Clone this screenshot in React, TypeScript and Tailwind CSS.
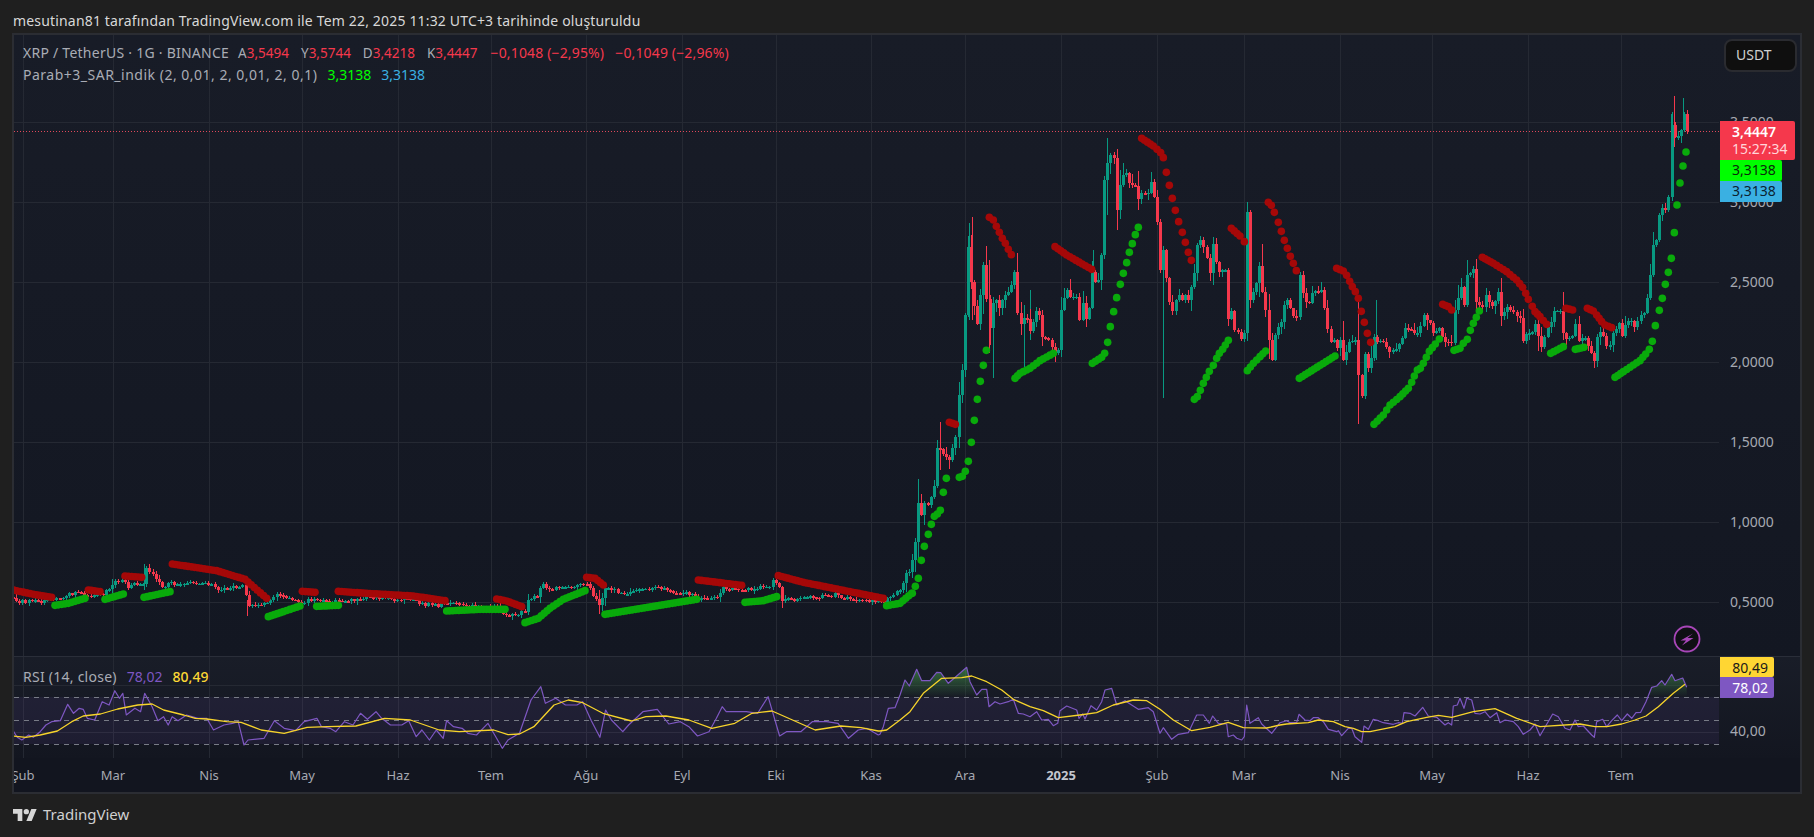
import React from "react";

type P = [number, number];
const z = (ox: number, oy: number, a: number[]): P[] => {
  const r: P[] = [];
  for (let i = 0; i < a.length; i += 2) r.push([ox + a[i] / 3, oy + a[i + 1] / 3]);
  return r;
};
const zw = (a: number[]): P[] => {
  const r: P[] = [];
  for (let i = 0; i < a.length; i += 2) r.push([a[i] / 1.742, 650 + a[i + 1] / 3]);
  return r;
};

const closeTrace: P[] = [
  ...z(0, 540, [40,175,60,185,90,183,130,183,150,178,190,175,205,160,225,160,250,165,275,170,305,165,320,150,350,125,375,122,380,145,400,130,430,135,435,85,450,95,470,120,490,140,510,125,525,135,560,125,600,130,630,130,650,150,690,140,725,135,735,165,745,200,800,190,825,165,860,175,900,185,950,175,990,185,1035,185,1080,180,1110,170,1180,178,1245,180,1260,192,1310,195,1350,190,1400,200]),
  ...z(470, 540, [40,202,80,200,95,222,125,225,160,215,175,180,200,170,215,130,235,150,270,140,300,140,330,130,350,135,370,165,390,195,405,145,430,145,450,160,490,155,520,150,560,140,590,150,620,160,660,160,685,175,740,170,760,145,800,150,850,145,895,140,910,120,925,140,935,180,990,175,1040,170,1090,165,1150,180,1200,182,1245,185]),
  ...z(850, 200, [110,1190,130,1183,150,1170,170,1115,180,1115,188,1080,196,1025,205,910,215,945,225,910,235,915,253,855,262,745,280,760,290,770,298,780,307,745,316,710,328,585,338,510,347,345,356,140,365,245,374,318,383,372,392,285,400,195]),
  ...z(900, 120, [267,625,280,550,290,540,300,565,309,540,318,525,327,515,335,495,345,455,355,580,363,612,372,595,382,597,391,632,400,605,409,572,418,585,427,652,436,655,445,660,454,680,463,700,472,690,484,570,493,535,500,510,510,530,519,530,528,530,537,600,546,550,555,598,568,565,578,455,587,485,596,480,605,405,613,180,622,130,631,105,640,115,649,270,660,195,670,165,680,160,689,190,698,195,707,197,716,238,725,220,743,215,752,187,761,230,770,305,781,450,790,390,800,475,808,545,818,572,827,540,836,525,845,540,855,525,864,540,873,500,883,460,892,375,901,360,910,380,919,415,928,458,939,373,947,425,957,455,966,450,975,450,985,597,994,573,1003,630,1012,635,1021,658,1030,640,1041,275,1050,540,1060,515,1069,488,1079,437,1088,515,1097,570,1106,660,1115,720,1124,645,1133,620,1142,605,1151,555,1160,540,1170,565,1179,588,1188,590,1198,465,1207,520,1216,545,1225,550,1235,520,1244,510,1262,510,1272,565,1281,628,1291,665,1300,660,1309,685,1320,660,1330,720,1340,695,1349,665,1364,660,1371,765,1385,828,1394,703,1405,745,1414,715,1423,650,1432,665,1450,665,1470,695,1490,685]),
  ...z(1300, 230, [315,295,330,300,345,310,355,310,370,255,385,280,397,305,415,295,430,322,440,335,455,338,465,240,480,170,492,225,505,135,520,118,530,215,543,230,555,195,565,215,578,228,595,190,605,258,620,235,640,245,655,265,668,332,680,312,697,305,705,280,725,350,733,320,750,275,760,243,775,242,790,308,800,328,815,318,825,282,835,330,855,320,872,368,882,392,893,320,905,305,920,348,930,345,940,310,955,280,965,318,975,285,992,272,1005,292,1012,270,1030,250,1040,205,1048,135,1058,45]),
  [1656,240],[1659,215],[1662,208],[1665,210],[1668,197],[1671.7,125],[1675,137],[1678,136],[1681,130],[1684,114],[1687,131],
];

const wicksExtra: [number, number, number, string][] = [
  [1163.3,250,398,"g"],[1358.3,300,424,"r"],[1247,202,330,"g"],[1107,138,215,"g"],[1116.7,160,230,"r"],[918,479,560,"g"],[940,422,470,"r"],
  [968.7,223,320,"g"],[971.7,217,320,"r"],[993,300,378,"g"],[989,260,353,"r"],[1024,305,368,"g"],[1674,96,147,"r"],[1683,98,130,"g"],[1687,110,134,"r"],[1671,114,195,"g"],
  [144.3,564,590,"g"],[246.7,600,616,"r"],[599,590,614,"r"],[1376,300,360,"g"],[1093,250,300,"g"],[1030,290,340,"g"],
];

function rng(seed: number) {
  let a = seed;
  return () => {
    a |= 0; a = (a + 0x6d2b79f5) | 0;
    let t = Math.imul(a ^ (a >>> 15), 1 | a);
    t = (t + Math.imul(t ^ (t >>> 7), 61 | t)) ^ t;
    return ((t ^ (t >>> 14)) >>> 0) / 4294967296;
  };
}

function buildCandles() {
  const rand = rng(77);
  const out: { x: number; o: number; c: number; h: number; l: number }[] = [];
  let prev = 597;
  const tr = closeTrace;
  for (let k = 540; k >= 0; k--) {
    const x = 1687 - k * 3.1;
    if (x < 13) continue;
    let i = 0;
    while (i < tr.length - 2 && tr[i + 1][0] < x) i++;
    const [x0, y0] = tr[i];
    const [x1, y1] = tr[i + 1];
    let c: number;
    if (Math.abs(x - x0) < 1.6) c = y0;
    else if (Math.abs(x - x1) < 1.6) c = y1;
    else c = y0 + ((y1 - y0) * (x - x0)) / (x1 - x0 || 1);
    const sparse = x1 - x0 > 5;
    if (sparse) c += (rand() - 0.5) * 3.5;
    const o = prev;
    const body = Math.abs(c - o);
    const base = x > 900 ? 8 : 2.5;
    const hw = rand() * rand() * (base + Math.min(body, 30) * 0.6) + 0.8;
    const lw = rand() * rand() * (base + Math.min(body, 30) * 0.6) + 0.8;
    out.push({ x, o, c, h: Math.min(o, c) - hw, l: Math.max(o, c) + lw });
    prev = c;
  }
  return out;
}
const candles = buildCandles();

const sar: { c: string; p: P[] }[] = [
  { c: "r", p: z(0, 540, [40,150,100,163,155,172]) },
  { c: "g", p: z(0, 540, [165,196,205,190,255,175]) },
  { c: "r", p: z(0, 540, [265,150,300,155]) },
  { c: "g", p: z(0, 540, [315,178,370,162]) },
  { c: "r", p: z(0, 540, [375,108,425,112]) },
  { c: "g", p: z(0, 540, [432,172,510,155]) },
  { c: "r", p: z(0, 540, [517,72,650,92,735,118,800,175]) },
  { c: "g", p: z(0, 540, [805,230,850,215,900,198]) },
  { c: "r", p: z(0, 540, [907,154,945,157]) },
  { c: "g", p: z(0, 540, [950,199,1015,196]) },
  { c: "r", p: z(0, 540, [1015,154,1100,160,1240,168,1335,182]) },
  { c: "g", p: z(0, 540, [1340,213,1440,208,1515,208]) },
  { c: "r", p: z(470, 540, [80,177,110,183,155,200]) },
  { c: "g", p: z(470, 540, [165,248,205,235,240,205,280,178,345,152]) },
  { c: "r", p: z(470, 540, [350,112,375,115,400,135]) },
  { c: "g", p: z(470, 540, [405,223,680,178]) },
  { c: "r", p: z(470, 540, [685,120,815,136]) },
  { c: "g", p: z(470, 540, [825,187,880,182,920,170]) },
  { c: "r", p: z(470, 540, [925,107,1000,127,1240,175]) },
  { c: "g", p: [...z(470, 540, [1250,197,1290,190,1325,160]), ...z(850, 200, [187,1180,196,1159,205,1135,214,1081,223,1039,235,1003,244,973,253,949,262,942,271,931,280,877,289,835])] },
  { c: "r", p: z(850, 200, [298,667,316,673]) },
  { c: "g", p: z(850, 200, [328,832,337,829,346,814,355,784,364,727,373,661,382,598,391,544,400,496,409,451]) },
  { c: "r", p: z(900, 120, [268,292,280,300,289,319,298,337,307,355,316,370,325,388,334,404]) },
  { c: "g", p: z(900, 120, [345,775,360,760,390,745,420,722,460,700]) },
  { c: "r", p: z(900, 120, [465,380,500,405,575,448]) },
  { c: "g", p: z(900, 120, [577,730,605,712,614,700,623,667,631,620,641,575,650,533,661,493,670,460,680,428,688,397,697,371,706,344,715,322]) },
  { c: "r", p: z(900, 120, [725,55,760,78,782,98,790,113,799,157,808,196,817,235,826,271,836,305,847,337,856,367,865,397,874,421]) },
  { c: "g", p: z(900, 120, [883,838,892,830,901,811,910,790,919,772,928,754,940,736,950,715,958,700,968,688,976,675,985,661]) },
  { c: "r", p: z(900, 120, [994,325,1020,348,1033,365]) },
  { c: "g", p: z(900, 120, [1042,752,1060,730,1080,710,1097,693]) },
  { c: "r", p: z(900, 120, [1105,247,1114,256,1123,277,1135,307,1144,334,1153,361,1162,385,1171,409,1180,430,1189,452]) },
  { c: "g", p: z(900, 120, [1198,775,1305,708]) },
  { c: "r", p: z(900, 120, [1310,445,1330,453,1340,466,1349,484,1357,500,1366,515,1375,535,1384,574,1393,607,1402,640,1412,667]) },
  { c: "g", p: z(1300, 230, [222,583,250,555,270,525,300,500,325,475,335,457,343,438,352,420,361,415,370,400,379,382,388,364,397,353,406,342,418,327]) },
  { c: "r", p: z(1300, 230, [428,223,445,230,455,240]) },
  { c: "g", p: z(1300, 230, [462,361,480,355,490,340,502,328,511,301,520,280,529,262,538,243]) },
  { c: "r", p: z(1300, 230, [547,82,580,100,620,125,650,150,668,172,677,190,685,208,697,229,705,245,720,260,740,283]) },
  { c: "g", p: z(1300, 230, [752,370,790,350]) },
  { c: "r", p: z(1300, 230, [798,235,818,240]) },
  { c: "g", p: z(1300, 230, [826,358,852,352]) },
  { c: "r", p: z(1300, 230, [862,235,880,243,890,255,905,275,915,285,935,293]) },
  { c: "g", p: [...z(1300, 230, [945,442,970,425,1020,392,1037,372,1048,358,1057,334,1066,287,1078,241,1087,205,1096,163,1105,127,1114,85,1123,8]), [1677,205],[1680,183],[1683,166],[1686,152]] },
];

const sarDots: { x: number; y: number; c: string }[] = [];
sar.forEach((s) => {
  s.p.forEach((pt, i) => {
    sarDots.push({ x: pt[0], y: pt[1], c: s.c });
    const n = s.p[i + 1];
    if (n && n[0] - pt[0] > 4.5) {
      const steps = Math.round((n[0] - pt[0]) / 3.1);
      for (let j = 1; j < steps; j++) {
        sarDots.push({ x: pt[0] + ((n[0] - pt[0]) * j) / steps, y: pt[1] + ((n[1] - pt[1]) * j) / steps, c: s.c });
      }
    }
  });
});

const rsiPurple: P[] = [
  ...zw([22,240,30,262,38,270,50,255,58,262,70,245,80,225,90,215,105,212,118,163,128,190,138,175,145,178,152,205,165,210,178,155,190,165,200,122,208,145,214,130,220,195,235,175,245,185,252,130,265,170,275,212,285,200,293,225,300,200,310,212,325,195,345,205,360,205,372,240,390,225,405,220,415,215,425,285,432,270,460,265,478,212,495,235,515,242,530,215,552,205,560,230,575,235,585,245,600,215,615,225,628,190,640,208,655,185,665,205,680,225,700,225,712,212,725,260,735,240,748,270,760,240,772,265,778,212,790,230,805,235,815,250,830,255,850,220,865,265,875,295,885,270,905,250,925,150,942,110,950,160,968,145,985,165,1005,165,1015,155,1030,212,1045,262,1055,180,1065,210,1085,245,1095,225,1120,185,1145,178,1165,222,1185,215,1200,230,1215,258,1235,245,1248,205,1258,170,1265,185,1300,185,1320,190,1338,140,1358,258,1370,245,1395,245,1415,215,1440,215,1460,220,1478,265,1495,240,1510,235,1530,255]),
  ...z(880, 640, [0,283,10,260,25,205,45,203,60,165,75,120,88,138,110,88,125,122,150,122,170,97,182,98,205,130,230,108,260,82,270,125,290,165,305,148,320,148,327,200,345,185,360,192,385,185,400,178,415,220,430,222,450,230,470,215,485,240,505,238,520,257,533,250,540,212,560,198,590,210,597,235,608,222,615,237,633,197,650,210,665,185,675,150,695,145,710,195,735,182,775,208,805,203,820,215,840,280,850,263,875,298,895,283,925,278,950,225,970,225,988,250,998,228,1015,250,1040,252,1045,290,1060,285,1070,295,1085,300,1093,290,1100,195,1110,250,1135,233,1145,252,1175,280]),
  ...z(1230, 650, [150,218,170,212,180,218,200,218,207,193,225,210,240,212,250,203,265,203,280,215,295,238,320,245,325,242,335,257,355,235,365,235,375,260,395,277,402,228,415,238,430,208,445,212,460,218,490,223,505,218,517,220,522,188,540,190,555,198,578,172,595,198,620,202,645,225,655,218,665,225,670,168,682,165,690,145,702,175,710,145,725,150,735,190,750,192,765,185,780,203,800,188,810,218,825,210,850,215,865,230,880,253,900,240,915,222,930,257,968,192,985,200,1005,235,1020,240,1035,210,1045,230,1060,228,1085,255,1093,262,1100,215,1118,208,1130,230,1145,212,1162,195,1175,212,1192,192,1205,205,1218,188,1232,187,1248,155,1265,112,1280,108,1295,92,1305,105,1325,73,1335,92,1358,84,1370,112]),
];

const rsiYellow: P[] = [
  ...zw([22,258,45,262,70,255,100,243,125,215,145,198,175,192,205,177,240,165,265,162,285,180,320,195,340,205,360,207,395,215,420,217,455,240,495,250,535,232,570,230,620,228,670,205,715,210,765,240,800,245,860,240,885,254,905,252,930,230,965,165,990,150,1015,158,1050,190,1100,213,1125,200,1160,198,1200,210,1240,235,1280,220,1310,190,1345,183,1420,240,1465,228,1500,233,1530,243]),
  ...z(880, 640, [0,273,20,270,60,240,90,215,130,160,185,115,245,113,275,108,320,125,365,150,400,178,450,200,490,212,535,233,600,225,650,218,700,195,760,180,800,182,840,208,880,240,935,272,990,262,1045,247,1090,263,1160,264]),
  ...z(1230, 650, [150,225,170,222,235,218,265,210,310,215,345,230,370,235,395,245,420,245,495,230,530,215,590,202,625,196,665,202,730,185,795,176,860,205,930,230,1050,222,1095,230,1130,230,1175,222,1215,210,1248,198,1285,170,1330,130,1365,103]),
];

const toPath = (p: P[]) => p.map((q, i) => `${i ? "L" : "M"}${q[0].toFixed(1)} ${q[1].toFixed(1)}`).join("");
const purplePath = toPath(rsiPurple);
const yellowPath = toPath(rsiYellow);
const fillPath = `${purplePath}L${rsiPurple[rsiPurple.length - 1][0].toFixed(1)} 697L${rsiPurple[0][0].toFixed(1)} 697Z`;

const verticals = [23, 113, 209, 302, 398, 491, 586, 682, 776, 871, 965, 1061, 1157, 1244, 1340, 1432, 1528, 1621];
const times: { x: number; t: string; bold?: boolean }[] = [
  { x: 23, t: "Şub" }, { x: 113, t: "Mar" }, { x: 209, t: "Nis" }, { x: 302, t: "May" }, { x: 398, t: "Haz" }, { x: 491, t: "Tem" },
  { x: 586, t: "Ağu" }, { x: 682, t: "Eyl" }, { x: 776, t: "Eki" }, { x: 871, t: "Kas" }, { x: 965, t: "Ara" }, { x: 1061, t: "2025", bold: true },
  { x: 1157, t: "Şub" }, { x: 1244, t: "Mar" }, { x: 1340, t: "Nis" }, { x: 1432, t: "May" }, { x: 1528, t: "Haz" }, { x: 1621, t: "Tem" },
];
const prices: { y: number; t: string }[] = [
  { y: 122, t: "3,5000" }, { y: 202, t: "3,0000" }, { y: 282, t: "2,5000" }, { y: 362, t: "2,0000" }, { y: 442, t: "1,5000" }, { y: 522, t: "1,0000" }, { y: 602, t: "0,5000" },
];
const hLines = [122, 202, 282, 362, 442, 522, 602];

const GRID = "#252933";
const G = "#089981";
const R = "#f5384c";

function ChartSvg() {
  return (
    <svg className="absolute inset-0" width={1786} height={757} viewBox="14 35 1786 757">
      <defs>
        <linearGradient id="ob" x1="0" y1="668" x2="0" y2="697" gradientUnits="userSpaceOnUse">
          <stop offset="0" stopColor="#4caf50" stopOpacity="0.55" />
          <stop offset="1" stopColor="#4caf50" stopOpacity="0" />
        </linearGradient>
        <clipPath id="above"><rect x="14" y="657" width="1705" height="40" /></clipPath>
        <clipPath id="plot"><rect x="14" y="35" width="1705" height="621" /></clipPath>
      </defs>
      {hLines.map((y) => <line key={y} x1={14} x2={1719} y1={y + 0.5} y2={y + 0.5} stroke={GRID} />)}
      {verticals.map((x) => <line key={x} x1={x + 0.5} x2={x + 0.5} y1={35} y2={758} stroke={GRID} />)}
      <line x1={14} x2={1800} y1={656.5} y2={656.5} stroke="#2a2e39" />
      {[685.5, 732.5].map((y) => <line key={y} x1={14} x2={1719} y1={y} y2={y} stroke={GRID} />)}
      <rect x={14} y={697} width={1705} height={47} fill="#7e57c2" fillOpacity={0.1} />
      {[697.5, 720.5, 744.5].map((y) => <line key={y} x1={14} x2={1719} y1={y} y2={y} stroke="#787b86" strokeDasharray="5 5" />)}
      <g clipPath="url(#plot)">
        <line x1={14} x2={1719} y1={131.5} y2={131.5} stroke="#e0485a" strokeDasharray="1 2" shapeRendering="crispEdges" />
        <g shapeRendering="crispEdges">
          {wicksExtra.map((w, i) => <rect key={i} x={Math.round(w[0])} y={w[1]} width={1} height={w[2] - w[1]} fill={w[3] === "g" ? G : R} />)}
          {candles.map((c, i) => {
            const col = c.c <= c.o ? G : R;
            const top = Math.min(c.o, c.c);
            const h = Math.max(Math.abs(c.o - c.c), 1.5);
            const cx = Math.round(c.x);
            return (
              <g key={i} fill={col}>
                <rect x={cx} y={c.h} width={1} height={c.l - c.h} />
                <rect x={cx - 1} y={top} width={3} height={h} />
              </g>
            );
          })}
        </g>
        {sarDots.map((d, i) => <circle key={i} cx={d.x} cy={d.y} r={3.8} fill={d.c === "g" ? "#09aa0b" : "#a50808"} />)}
      </g>
      <path d={fillPath} fill="url(#ob)" clipPath="url(#above)" />
      <path d={purplePath} fill="none" stroke="#7e57c2" strokeWidth={1.2} strokeLinejoin="round" />
      <path d={yellowPath} fill="none" stroke="#f7d42b" strokeWidth={1.3} strokeLinejoin="round" />
    </svg>
  );
}

function Logo() {
  return (
    <svg width={24} height={12} viewBox="0 4 36 18" fill="#d6d6d6">
      <path d="M14 22H7V11H0V4h14v18zM28 22h-8l7.5-18h8L28 22z" />
      <circle cx="20" cy="8" r="4" />
    </svg>
  );
}

const FONT = "font-['Noto_Sans',sans-serif]";

export default function App() {
  return (
    <div className={`flex flex-col h-[837px] w-full overflow-hidden bg-[#1f1f1f] ${FONT}`}>
      <div className="flex h-[33px] shrink-0 items-center pl-[13px] pt-[7px] text-[14px] tracking-[0.17px] text-[#d8d8d8]">
        mesutinan81 tarafından TradingView.com ile Tem 22, 2025 11:32 UTC+3 tarihinde oluşturuldu
      </div>

      <div className="relative ml-[12px] flex h-[761px] w-[1790px] shrink-0 flex-col overflow-hidden border-2 border-[#2b2d33] text-[14px]">
        <div className="h-[621px] shrink-0 bg-gradient-to-b from-[#181c27] to-[#131722]" />
        <div className="h-px shrink-0 bg-[#2a2e39]" />
        <div className="h-[101px] shrink-0 bg-gradient-to-b from-[#191d28] to-[#131620]" />
        <div className="relative flex-1 bg-[#12151f]">
          {times.map((t) => (
            <span
              key={t.x}
              className={`absolute top-[8px] -translate-x-1/2 text-[13px] ${t.bold ? "font-bold text-[#c3c6ce]" : "text-[#a6a9b2]"}`}
              style={{ left: t.x - 14 }}
            >
              {t.t}
            </span>
          ))}
        </div>

        <ChartSvg />

        {/* legend */}
        <div className="absolute left-[9px] top-[9px] flex flex-col gap-[4px] leading-[18px] text-[#a9acb5]">
          <div className="flex items-center">
            <span className="mr-[9px] tracking-[0.25px]">XRP / TetherUS · 1G · BINANCE</span>
            <span className="mr-[12px] text-[13.5px]">A<span className="text-[#f5384c]">3,5494</span></span>
            <span className="mr-[12px] text-[13.5px]">Y<span className="text-[#f5384c]">3,5744</span></span>
            <span className="mr-[12px] text-[13.5px]">D<span className="text-[#f5384c]">3,4218</span></span>
            <span className="mr-[13px] text-[13.5px]">K<span className="text-[#f5384c]">3,4447</span></span>
            <span className="mr-[11px] tracking-[0.15px] text-[#f5384c]">−0,1048 (−2,95%)</span>
            <span className="tracking-[0.15px] text-[#f5384c]">−0,1049 (−2,96%)</span>
          </div>
          <div className="flex items-center gap-[10px]">
            <span className="tracking-[0.5px]">Parab+3_SAR_indik (2, 0,01, 2, 0,01, 2, 0,1)</span>
            <span className="text-[#00ff00]">3,3138</span>
            <span className="text-[#3ab0e2]">3,3138</span>
          </div>
        </div>

        {/* USDT */}
        <div className="absolute right-[3px] top-[4px] flex h-[33px] w-[73px] items-center rounded-[8px] border-2 border-[#2a2b30] bg-[#0f0f0f] pb-[2px] pl-[10px] text-[14px] text-[#d0d0d0]">
          USDT
        </div>

        {/* price scale */}
        {prices.map((p) => (
          <span key={p.y} className="absolute left-[1716px] -translate-y-1/2 text-[14px] text-[#a6a9b2]" style={{ top: p.y - 36 }}>
            {p.t}
          </span>
        ))}
        <div className="absolute left-[1706px] top-[86px] flex h-[39px] w-[75px] flex-col justify-center rounded-r-[2px] bg-[#f5384c] pb-[2px] pl-[12px] text-[14px] leading-[17px] text-white">
          <span className="font-semibold">3,4447</span>
          <span className="text-[#ffd5d9]">15:27:34</span>
        </div>
        <div className="absolute left-[1706px] top-[125px] flex h-[21px] w-[62px] items-center rounded-r-[2px] bg-[#00ff00] pb-[2px] pl-[12px] text-[14px] text-[#0b2a0b]">3,3138</div>
        <div className="absolute left-[1706px] top-[146px] flex h-[21px] w-[62px] items-center rounded-r-[2px] bg-[#3ab0e2] pb-[2px] pl-[12px] text-[14px] text-[#0b2230]">3,3138</div>

        <div className="absolute left-[1706px] top-[622px] flex h-[20px] w-[54px] items-center justify-end rounded-r-[2px] bg-[#ffd633] pr-[6px] text-[14px] text-[#1a1a1a]">80,49</div>
        <div className="absolute left-[1706px] top-[642px] flex h-[21px] w-[54px] items-center justify-end rounded-r-[2px] bg-[#7e57c2] pr-[6px] text-[14px] text-white">78,02</div>
        <span className="absolute left-[1716px] top-[695px] -translate-y-1/2 text-[14px] text-[#a6a9b2]">40,00</span>

        {/* RSI legend */}
        <div className="absolute left-[9px] top-[633px] flex items-center gap-[10px] leading-[18px] text-[#a9acb5]">
          <span className="tracking-[0.25px]">RSI (14, close)</span>
          <span className="text-[#7e57c2]">78,02</span>
          <span className="font-medium text-[#fdd835]">80,49</span>
        </div>

        {/* alert badge */}
        <svg className="absolute left-[1659px] top-[590px]" width={28} height={28} viewBox="0 0 28 28">
          <circle cx="14" cy="14" r="12.5" fill="#0f0f14" stroke="#a846b8" strokeWidth="1.8" />
          <path d="M20 8.5 7.5 15.5H13L9 20.5 20.5 13H14.5Z" fill="#a846b8" />
        </svg>
      </div>

      <div className="flex flex-1 items-center gap-[6px] pl-[13px] pb-[2px]">
        <Logo />
        <span className="text-[15px] text-[#d0d0d0]">TradingView</span>
      </div>
    </div>
  );
}
